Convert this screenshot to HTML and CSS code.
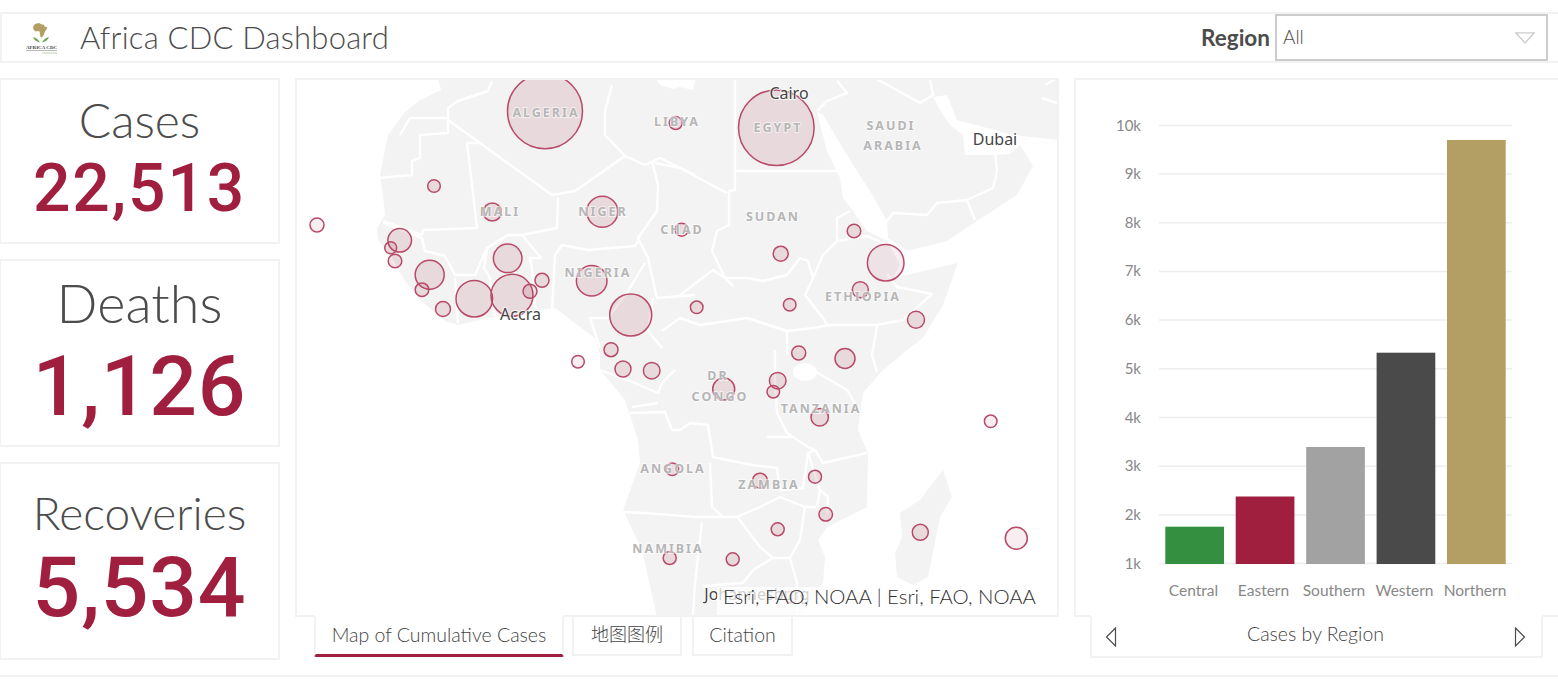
FILE: index.html
```html
<!DOCTYPE html>
<html lang="en">
<head>
    <meta charset="UTF-8" />
    <title>Africa CDC Dashboard</title>
    <link rel="stylesheet" href="styles.css">
</head>
<body>
    <header class="topbar">
        <div class="brand">
            <svg class="logo" viewBox="25 20 34 34" aria-hidden="true">
                <path class="logo-gold" d="M35 23l4-1 2 1 1 .5 2 .3.5 1.700 3 1-1.500 2.500-1.500 2.500-.5 2-2 3-1.500-.5-.5-3-.5-2.500-1.500-.5-2.500.5-2-2-.5-2.500z"/>
                <path class="logo-green" d="M33 36c1 3 4 5 7 5.500-1-2.500-4-5-7-5.500zM49 36c-1 3-4 5-7 5.500 1-2.500 4-5 7-5.500z"/>
                <text class="logo-name" x="41.500" y="47.500">AFRICA CDC</text>
                <path class="logo-small" d="M26 49.500h31"/>
                <path class="logo-tag" d="M42 52h15"/>
            </svg>
            <h1>Africa CDC Dashboard</h1>
        </div>
        <div class="filter">
            <label>Region</label>
            <div class="select">
                <span>All</span>
                <svg class="caret" viewBox="0 0 20 12"><path d="M.8.8h18.400L10 11z"/></svg>
            </div>
        </div>
    </header>

    <main class="dash">
        <section class="stats">
            <div class="card card-cases">
                <div class="card-label">Cases</div>
                <div class="card-value">22,513</div>
            </div>
            <div class="card card-deaths">
                <div class="card-label">Deaths</div>
                <div class="card-value">1,126</div>
            </div>
            <div class="card card-recoveries">
                <div class="card-label">Recoveries</div>
                <div class="card-value">5,534</div>
            </div>
        </section>

        <section class="map-col">
            <div class="panel map-panel">
                <svg class="map" viewBox="297 80 760 535" preserveAspectRatio="none">
                    <g class="land">
                        <path d="M438 78L441 90 420 100 405 112 388 135 380 175 383 195 385 215 377 228 378 240 392 258 405 281 420 300 445 321 458 325 498 316 555 308 572 321 595 338 600 355 600 370 625 400 638 440 640 463 623 510 642 550 657 617 800 617 823 583 825 557 818 540 827 527 867 507 868 453 858 430 863 393 880 373 907 350 923 338 943 305 958 263 907 275 893 278 900 265 887 241 867 231 853 211 843 198 840 178 827 151 817 112 823 115 853 165 870 191 887 221 888 238 907 251 947 241 977 221 1017 195 1033 166 1020 145 1059 141 1059 78z"/>
                        <path d="M943 470L952 497 940 517 928 577 913 585 897 577 895 553 902 537 900 513 920 500z"/>
                        <path class="water" d="M933 97L947 95 957 120 1013 135 1059 140 1059 141 1020 145 1010 154 995 155 965 155 963 135 950 125 940 110z"/>
                        <path class="water" d="M655 78L660 85 673 89 680 87 693 90 696 78z"/>
                        <ellipse class="water" cx="805" cy="372" rx="12" ry="9"/>
                    </g>
                    <g class="borders">
                        <path d="M492 81l-4 10-30 10-10 7v10h-38l-10 17"/>
                        <path d="M448 118v15l-28 2v23l-8 3v14l-34 3"/>
                        <path d="M448 120l104 75 23-4 50-35 20 9 15-7 35 17"/>
                        <path d="M467 143h10l-10 0 10 85-54 2-1 5-39-14"/>
                        <path d="M625 156l-20-21v-24l7-26"/>
                        <path d="M652 161l6 24-1 26-19 27 10 20 9 40 38-3"/>
                        <path d="M558 198l-1 30-35 7h-14l-21 13-12 27h-20l-10-19-20-5-3-13-39-15"/>
                        <path d="M522 235l19 23-11 0 2 10 3 40"/>
                        <path d="M555 255l7-10 26 5 47-4 3-5"/>
                        <path d="M555 255l-3 56"/>
                        <path d="M455 278l3 45"/>
                        <path d="M487 248l-3 20 6 10 5 38"/>
                        <path d="M645 263l-17 28-20 27h-18l10 30"/>
                        <path d="M653 298l-5 33 14 17"/>
                        <path d="M735 78v93h102"/>
                        <path d="M735 171v19l-6 1v34l-12 6-5 20 13 27 8 8"/>
                        <path d="M727 193l-47-25-25-5"/>
                        <path d="M725 278h22l16 3 24-6 13-17 8 3 5 17 10-23 14-14v-23l13-7"/>
                        <path d="M837 241l30-5 20 9"/>
                        <path d="M813 278l-8 17 18 23 4 7h50l26-5 29-26-35-7-10-13"/>
                        <path d="M877 326l-5 29 5 17"/>
                        <path d="M813 370l34 20 16 27"/>
                        <path d="M787 331v24"/>
                        <path d="M662 331l18-13 20 7 47-7 40 13 26-3 17-3"/>
                        <path d="M680 295l33-25 12 8"/>
                        <path d="M775 350v33l2 30 10 20 21 14 7 3 8 13 44-10"/>
                        <path d="M630 413l35-1 7 18h8l10-7 18 2 5 32 14 3 25 5 25 3 3 22 23-2 5-35 7-3"/>
                        <path d="M623 512l22 1 50 4 28 0 14 0 23-10 20-10 25 10-5 33-10 18h-17l-13-11-22-29"/>
                        <path d="M710 463l2 44 11 10"/>
                        <path d="M808 453l12 37 8 7-1 16"/>
                        <path d="M805 507h12l3-17"/>
                        <path d="M702 522l-7 61-2 32"/>
                        <path d="M773 558l-20 12-10 13-40 3"/>
                        <path d="M790 558l7 25 0 32"/>
                        <path d="M600 370l35 13 23 10 4-10 13-13"/>
                        <path d="M632 407l26-4"/>
                        <path d="M767 437h26"/>
                        <path d="M817 111l10-10 20-8-10-12"/>
                        <path d="M875 78l45 25 13-8-3-15"/>
                        <path d="M887 221l6-8 34 2 10-12 30-3 26-12 4-17-2-20"/>
                        <path d="M967 200l8 20"/>
                        <path d="M1042 98l15 5M1045 85l12-7"/>
                    </g>
                    <g class="bubbles">
                        <circle cx="545" cy="111.300" r="37.500"/>
                        <circle cx="675.700" cy="123" r="6.500"/>
                        <circle cx="434" cy="186" r="6.300"/>
                        <circle cx="492.300" cy="212" r="9"/>
                        <circle cx="602.300" cy="211.700" r="15.500"/>
                        <circle cx="681.700" cy="229.700" r="6.500"/>
                        <circle class="faint" cx="317" cy="225" r="7"/>
                        <circle cx="399.700" cy="240.300" r="11.800"/>
                        <circle cx="390.700" cy="247.700" r="6"/>
                        <circle cx="395" cy="261" r="6.800"/>
                        <circle cx="429.700" cy="274.700" r="14.500"/>
                        <circle cx="422" cy="289.700" r="6.800"/>
                        <circle cx="443" cy="309" r="7.500"/>
                        <circle cx="474.300" cy="298.700" r="18.300"/>
                        <circle cx="507.700" cy="258.300" r="14.300"/>
                        <circle cx="512" cy="295.300" r="21"/>
                        <circle cx="530" cy="291.300" r="7"/>
                        <circle cx="542" cy="280.300" r="7"/>
                        <circle cx="591.700" cy="280.700" r="15.300"/>
                        <circle cx="630.700" cy="315" r="21"/>
                        <circle cx="696.700" cy="307.300" r="6.300"/>
                        <circle class="faint" cx="578" cy="361.700" r="6.300"/>
                        <circle cx="611" cy="349.700" r="7"/>
                        <circle cx="623" cy="369" r="8"/>
                        <circle cx="651.700" cy="370.700" r="8.300"/>
                        <circle cx="776.300" cy="127.700" r="37.800"/>
                        <circle cx="780.700" cy="253.700" r="7.500"/>
                        <circle cx="854" cy="231" r="6.800"/>
                        <circle class="faint" cx="885.700" cy="262.700" r="18.300"/>
                        <circle cx="860.300" cy="289.700" r="8"/>
                        <circle cx="789.700" cy="304.700" r="6.300"/>
                        <circle cx="916" cy="319.700" r="8.500"/>
                        <circle cx="798.700" cy="353" r="7"/>
                        <circle cx="845" cy="358.500" r="10"/>
                        <circle cx="723.700" cy="389" r="11"/>
                        <circle cx="777.700" cy="380.700" r="8.300"/>
                        <circle cx="773.300" cy="391.700" r="6.300"/>
                        <circle cx="819.700" cy="417.300" r="8.700"/>
                        <circle class="faint" cx="990.700" cy="421.300" r="6.300"/>
                        <circle cx="672.300" cy="469.300" r="6.300"/>
                        <circle cx="760" cy="480.700" r="7.500"/>
                        <circle cx="815" cy="476.700" r="6.500"/>
                        <circle cx="825.700" cy="514.300" r="6.800"/>
                        <circle cx="777.700" cy="529.300" r="6.500"/>
                        <circle cx="669.700" cy="558" r="6.500"/>
                        <circle cx="732.700" cy="559.300" r="6.500"/>
                        <circle cx="920.300" cy="532.300" r="8"/>
                        <circle class="faint" cx="1016.300" cy="538.300" r="11"/>
                        <circle cx="791" cy="597" r="6"/>
                    </g>
                    <g class="countries">
                        <text x="546" y="116.500">ALGERIA</text>
                        <text x="677" y="126">LIBYA</text>
                        <text x="778" y="131.500">EGYPT</text>
                        <text x="891" y="130">SAUDI</text>
                        <text x="893" y="150">ARABIA</text>
                        <text x="500" y="215.500">MALI</text>
                        <text x="603" y="215.500">NIGER</text>
                        <text x="682" y="233.500">CHAD</text>
                        <text x="773" y="220.500">SUDAN</text>
                        <text x="598" y="276.500">NIGERIA</text>
                        <text x="863" y="300.500">ETHIOPIA</text>
                        <text x="718" y="380">DR</text>
                        <text x="720" y="400.500">CONGO</text>
                        <text x="821" y="413">TANZANIA</text>
                        <text x="673" y="473">ANGOLA</text>
                        <text x="769" y="489">ZAMBIA</text>
                        <text x="668" y="553">NAMIBIA</text>
                    </g>
                    <g class="cities">
                        <text x="789" y="98.500">Cairo</text>
                        <text x="995" y="144.500">Dubai</text>
                        <text x="520.500" y="320">Accra</text>
                        <text x="757" y="600">Johannesburg</text>
                    </g>
                </svg>
                <div class="attribution">Esri, FAO, NOAA | Esri, FAO, NOAA</div>
            </div>
            <nav class="tabs">
                <a class="tab active">Map of Cumulative Cases</a>
                <a class="tab tab-legend">地图图例</a>
                <a class="tab tab-citation">Citation</a>
            </nav>
        </section>

        <section class="chart-col">
            <div class="panel chart-panel">
                <svg class="chart" viewBox="1076 80 482 535" preserveAspectRatio="none">
                    <g class="grid">
                        <path d="M1159 125.500h353"/>
                        <path d="M1159 174h353"/>
                        <path d="M1159 222.700h353"/>
                        <path d="M1159 271.400h353"/>
                        <path d="M1159 320.100h353"/>
                        <path d="M1159 368.800h353"/>
                        <path d="M1159 417.500h353"/>
                        <path d="M1159 466.200h353"/>
                        <path d="M1159 515h353"/>
                        <path d="M1159 563.500h353"/>
                    </g>
                    <g class="y-labels">
                        <text x="1141" y="131">10k</text>
                        <text x="1141" y="179">9k</text>
                        <text x="1141" y="228">8k</text>
                        <text x="1141" y="276">7k</text>
                        <text x="1141" y="325">6k</text>
                        <text x="1141" y="374">5k</text>
                        <text x="1141" y="423">4k</text>
                        <text x="1141" y="471">3k</text>
                        <text x="1141" y="520">2k</text>
                        <text x="1141" y="569">1k</text>
                    </g>
                    <rect class="bar-central" x="1165.300" y="526.700" width="58.700" height="37.300"/>
                    <rect class="bar-eastern" x="1235.700" y="496.500" width="58.700" height="67.500"/>
                    <rect class="bar-southern" x="1306.200" y="447" width="58.700" height="117"/>
                    <rect class="bar-western" x="1376.600" y="352.700" width="58.700" height="211.300"/>
                    <rect class="bar-northern" x="1447" y="140" width="58.700" height="424"/>
                    <g class="x-labels">
                        <text x="1193.500" y="596">Central</text>
                        <text x="1263.500" y="596">Eastern</text>
                        <text x="1334" y="596">Southern</text>
                        <text x="1404.500" y="596">Western</text>
                        <text x="1475" y="596">Northern</text>
                    </g>
                </svg>
            </div>
            <div class="pager">
                <svg class="arrow" viewBox="0 0 12 20"><path d="M10.500 1L1.500 10l9 9z"/></svg>
                <span>Cases by Region</span>
                <svg class="arrow" viewBox="0 0 12 20"><path d="M1.500 1l9 9-9 9z"/></svg>
            </div>
        </section>
    </main>

    <div class="footer-strip"></div>
</body>
</html>
```

FILE: styles.css
```css
:root {
    --line: #f2f2f2;
    --text: #4c4c4c;
    --red: #a01f3f;
}

html, body {
    margin: 0;
    height: 679px;
    overflow: hidden;
    background-color: white;
}

body {
    font-family: Lato, "Open Sans", sans-serif;
    color: var(--text);
    padding-top: 12px;
    box-sizing: border-box;
}

.topbar {
    height: 51px;
    box-sizing: border-box;
    border: 2px solid var(--line);
    border-right: none;
    display: flex;
    align-items: center;
    justify-content: space-between;
    margin-bottom: 15px;
}

.brand {
    display: flex;
    align-items: center;
}

.logo {
    width: 34px;
    height: 34px;
    margin-left: 23px;
    margin-right: 21px;
}

.logo-gold { fill: #b39f63; }
.logo-green { fill: #6aa84f; }
.logo-name {
    font-family: "Liberation Serif", serif;
    font-size: 5px;
    font-weight: bold;
    text-anchor: middle;
    fill: #444;
}
.logo-small { stroke: #aaa; stroke-width: .8; }
.logo-tag { stroke: #a9c79a; stroke-width: .8; }

h1 {
    margin: -2px 0 0;
    font-size: 31px;
    font-weight: 300;
    letter-spacing: .2px;
}

.filter {
    display: flex;
    align-items: center;
    gap: 5px;
    margin-right: 10px;
}

.filter label {
    font-size: 22.500px;
    font-weight: 700;
}

.select {
    width: 273px;
    height: 47px;
    box-sizing: border-box;
    border: 2px solid #ccc;
    display: flex;
    align-items: center;
    justify-content: space-between;
    padding: 0 11px 0 6px;
    font-size: 19px;
    font-weight: 300;
}

.select span {
    margin-top: -2px;
}

.caret {
    width: 20px;
    height: 12px;
    fill: none;
    stroke: #ccc;
    stroke-width: 1.300;
}

.dash {
    display: flex;
    height: 582px;
}

.stats {
    width: 280px;
    display: flex;
    flex-direction: column;
    gap: 15px;
    margin-right: 15px;
}

.card {
    box-sizing: border-box;
    border: 2px solid var(--line);
    border-left-width: 1px;
    text-align: center;
    display: flex;
    flex-direction: column;
    align-items: center;
}

.card-cases { height: 166px; padding-top: 11px; }
.card-deaths { height: 188px; padding-top: 10px; }
.card-recoveries { height: 198px; padding-top: 21px; }

.card-label {
    font-weight: 300;
    line-height: 1.200;
}

.card-value {
    font-family: Roboto, sans-serif;
    color: var(--red);
    font-weight: 500;
    line-height: 1.100;
}

.card-cases .card-label { font-size: 48px; }
.card-cases .card-value { font-size: 66px; letter-spacing: 1.800px; margin-top: 4px; }
.card-deaths .card-label { font-size: 54px; }
.card-deaths .card-value { font-size: 84px; letter-spacing: .8px; margin-top: 5px; }
.card-recoveries .card-label { font-size: 46px; }
.card-recoveries .card-value { font-size: 84px; letter-spacing: .8px; margin-top: 2px; }

.map-col {
    width: 764px;
    margin-right: 15px;
    display: flex;
    flex-direction: column;
}

.panel {
    position: relative;
    height: 539px;
    box-sizing: border-box;
    border: 2px solid var(--line);
    overflow: hidden;
}

.map-panel svg,
.chart-panel svg {
    display: block;
    width: 100%;
    height: 100%;
}

.map {
    background-color: white;
}

.land path, .land ellipse { fill: #f3f3f3; }
.land .water { fill: white; }

.borders path {
    fill: none;
    stroke: white;
    stroke-width: 2.400;
    stroke-linejoin: round;
}

.bubbles circle {
    fill: rgba(160, 31, 63, .12);
    stroke: #b84a68;
    stroke-width: 1.500;
}

.bubbles .faint {
    fill: rgba(160, 31, 63, .08);
}

.countries text {
    font-family: "Noto Sans", sans-serif;
    font-size: 12.500px;
    font-weight: 700;
    letter-spacing: 2px;
    text-anchor: middle;
    fill: #b6b6b6;
    stroke: rgba(255, 255, 255, .6);
    stroke-width: 2px;
    paint-order: stroke;
}

.cities text {
    font-family: "Noto Sans", sans-serif;
    font-size: 16px;
    text-anchor: middle;
    fill: #444;
    stroke: rgba(255, 255, 255, .8);
    stroke-width: 2px;
    paint-order: stroke;
}

.attribution {
    position: absolute;
    right: 0;
    bottom: 0;
    width: 340px;
    height: 28px;
    padding-right: 21px;
    box-sizing: border-box;
    background-color: rgba(255, 255, 255, .75);
    color: #333;
    font-size: 20.400px;
    font-weight: 300;
    line-height: 18px;
    text-align: right;
    white-space: nowrap;
}

.tabs {
    display: flex;
    padding-left: 19px;
    margin-top: -2px;
    position: relative;
}

.tab {
    height: 41px;
    box-sizing: border-box;
    border: 2px solid var(--line);
    color: #444;
    font-size: 19.500px;
    font-weight: 300;
    line-height: 35px;
    text-align: center;
    background-color: white;
}

.tab.active {
    width: 250px;
    height: 42px;
    border-top: 2px solid white;
    border-bottom: 3px solid var(--red);
    border-radius: 0 0 2px 2px;
}

.tab-legend {
    width: 110px;
    margin-left: 8px;
    font-size: 18px;
    font-family: Lato, "Noto Sans CJK SC", sans-serif;
}

.tab-citation {
    width: 101px;
    margin-left: 10px;
}

.chart-col {
    flex: 1;
    display: flex;
    flex-direction: column;
    align-items: center;
}

.chart-panel {
    width: 100%;
    border-right: none;
}

.grid path {
    stroke: #eee;
    stroke-width: 1.500;
}

.y-labels text {
    font-size: 15px;
    text-anchor: end;
    fill: #888;
}

.x-labels text {
    font-size: 15.500px;
    text-anchor: middle;
    fill: #888;
}

.bar-central { fill: #348f41; }
.bar-eastern { fill: #a01f3f; }
.bar-southern { fill: #a2a2a2; }
.bar-western { fill: #4a4a4a; }
.bar-northern { fill: #b39f63; }

.pager {
    width: 453px;
    height: 43px;
    margin-top: -2px;
    box-sizing: border-box;
    border: 2px solid var(--line);
    border-top: 2px solid white;
    background-color: white;
    display: flex;
    align-items: center;
    justify-content: space-between;
    padding: 0 14px 0 13px;
    color: #444;
    font-size: 19.500px;
    font-weight: 300;
    position: relative;
}

.pager span {
    margin-top: -6px;
}

.arrow {
    width: 12px;
    height: 20px;
    fill: none;
    stroke: #4c4c4c;
    stroke-width: 1.200;
}

.footer-strip {
    margin-top: 15px;
    height: 2px;
    background-color: var(--line);
}
```
